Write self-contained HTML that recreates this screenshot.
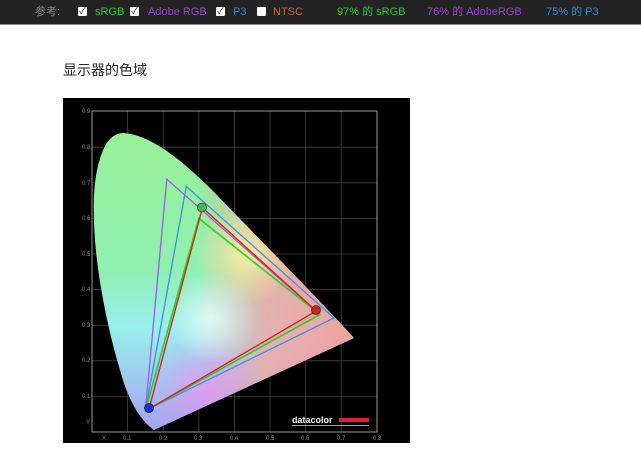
<!DOCTYPE html>
<html><head><meta charset="utf-8"><style>
*{margin:0;padding:0;box-sizing:border-box}
body{width:641px;height:452px;background:#fff;overflow:hidden;font-family:"Liberation Sans","Noto Sans CJK SC",sans-serif;position:relative}
.bar{position:absolute;left:0;top:0;width:641px;height:25px;background:#232323;border-bottom:1px solid #888}
.bar span{position:absolute;top:6px;font-size:11px;line-height:13px;white-space:nowrap}
.cb{position:absolute;top:7px;width:9px;height:9px;background:#fff;border-radius:1px;color:#222;font-size:9px;line-height:9px;text-align:center}
.t{position:absolute;left:63px;top:60px;font-size:14px;color:#222}
svg{position:absolute;left:63px;top:98px}
</style></head><body>
<div class="bar">
<span style="left:35px;color:#888">参考:</span>
<div class="cb" style="left:78px">✓</div><span style="left:95px;color:#2c2">sRGB</span>
<div class="cb" style="left:130px">✓</div><span style="left:148px;color:#94c">Adobe RGB</span>
<div class="cb" style="left:216px">✓</div><span style="left:233px;color:#38c">P3</span>
<div class="cb" style="left:257px"></div><span style="left:273px;color:#c63">NTSC</span>
<span style="left:337px;color:#2c2">97% 的 sRGB</span>
<span style="left:427px;color:#94c">76% 的 AdobeRGB</span>
<span style="left:546px;color:#38c">75% 的 P3</span>
</div>
<div class="t">显示器的色域</div>
<svg width="347" height="345" viewBox="63 98 347 345">
<defs>
<linearGradient id="v" x1="0" y1="0" x2="0" y2="1" gradientUnits="objectBoundingBox">
<stop offset="0" stop-color="#98f098"/><stop offset="0.45" stop-color="#90f0b0"/><stop offset="0.65" stop-color="#98eeee"/><stop offset="1" stop-color="#a8a0f0"/></linearGradient>
<linearGradient id="h" x1="0" y1="0" x2="1" y2="0">
<stop offset="0.4" stop-color="#f0a0a0" stop-opacity="0"/><stop offset="0.65" stop-color="#f0a8a8" stop-opacity="0.85"/><stop offset="1" stop-color="#f0a0a0"/></linearGradient>
<radialGradient id="w" cx="212" cy="318" r="45" gradientUnits="userSpaceOnUse">
<stop offset="0" stop-color="#fff" stop-opacity="0.7"/><stop offset="1" stop-color="#fff" stop-opacity="0"/></radialGradient>
<radialGradient id="m" cx="205" cy="390" r="55" gradientUnits="userSpaceOnUse">
<stop offset="0" stop-color="#f090f0" stop-opacity="0.75"/><stop offset="1" stop-color="#f090f0" stop-opacity="0"/></radialGradient>
<radialGradient id="y" cx="245" cy="255" r="50" gradientUnits="userSpaceOnUse">
<stop offset="0" stop-color="#f8f8a0" stop-opacity="0.85"/><stop offset="1" stop-color="#f8f8a0" stop-opacity="0"/></radialGradient>
<clipPath id="c"><path d="M154,430 C140,420 128,400 120,370 C108,330 98,280 95,240 C92,200 94,170 104,148 C110,136 117,133 124,133 C150,135 180,158 212,190 C260,240 310,290 354,338 Z"/></clipPath>
</defs>
<rect x="63" y="98" width="347" height="345" fill="#000"/>
<g stroke="#444" stroke-width="0.8">
<path d="M127.6 111V432M163.2 111V432M198.8 111V432M234.4 111V432M270 111V432M305.6 111V432M341.2 111V432M92 396.4H377M92 360.8H377M92 325.2H377M92 289.6H377M92 254H377M92 218.4H377M92 182.8H377M92 147.2H377"/>
</g>
<rect x="92" y="111" width="285" height="321" fill="none" stroke="#999" stroke-width="1"/>
<g clip-path="url(#c)">
<rect x="90" y="130" width="270" height="305" fill="url(#v)"/>
<rect x="90" y="130" width="270" height="305" fill="url(#h)"/>
<rect x="90" y="130" width="270" height="305" fill="url(#m)"/>
<rect x="90" y="130" width="270" height="305" fill="url(#y)"/>
<rect x="90" y="130" width="270" height="305" fill="url(#w)"/>
</g>
<g fill="none" stroke-width="1.3">
<polygon points="320,314.5 166.8,179.2 145.4,410.6" stroke="#9a5ee0"/>
<polygon points="334,318 186.3,186.4 145.4,410.6" stroke="#3f8fe0"/>
<polygon points="320,314.5 198.8,218.4 145.4,410.6" stroke="#2ad02a" stroke-width="1.6"/>
<polygon points="316.3,311 202.4,207.7 149,408.9" stroke="#e02020" stroke-width="1.4"/>
</g>
<circle cx="149" cy="408" r="4.5" fill="#2030e0" stroke="#114" stroke-width="0.8"/>
<circle cx="202" cy="207.5" r="4.5" fill="#50b050" stroke="#263" stroke-width="0.8"/>
<circle cx="316" cy="310" r="4.5" fill="#d02020" stroke="#611" stroke-width="0.8"/>
<g fill="#888" font-size="6" font-family="Liberation Sans,sans-serif">
<text x="82" y="113">0.9</text><text x="82" y="149">0.8</text><text x="82" y="185">0.7</text><text x="82" y="220">0.6</text><text x="82" y="256">0.5</text><text x="82" y="291">0.4</text><text x="82" y="327">0.3</text><text x="82" y="362">0.2</text><text x="82" y="398">0.1</text><text x="86" y="424">Y</text>
<text x="102" y="440">X</text><text x="123" y="440">0.1</text><text x="159" y="440">0.2</text><text x="194" y="440">0.3</text><text x="230" y="440">0.4</text><text x="266" y="440">0.5</text><text x="301" y="440">0.6</text><text x="337" y="440">0.7</text><text x="373" y="440">0.8</text>
</g>
<text x="292" y="423" fill="#fff" font-size="9" font-weight="bold" font-family="Liberation Sans,sans-serif">datacolor</text>
<rect x="339" y="418" width="30" height="4" fill="#e02030"/>
<rect x="292" y="425" width="77" height="0.8" fill="#ccc"/>
</svg>
</body></html>
